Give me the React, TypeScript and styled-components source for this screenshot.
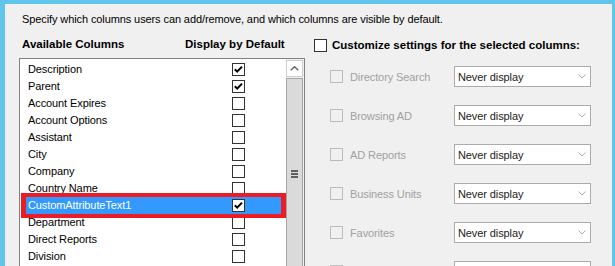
import React from "react";
import styled, { createGlobalStyle } from "styled-components";

const Global = createGlobalStyle`
  html, body { margin: 0; padding: 0; background: #f0f0f0; }
  body {
    font-family: "Liberation Sans", Arial, sans-serif;
    font-size: 11px;
    letter-spacing: -0.1px;
    color: #000;
  }
`;

const Window = styled.div`
  width: 615px;
  height: 266px;
  box-sizing: border-box;
  border-style: solid;
  border-color: #5fc5ea;
  border-width: 4px 3px 0 5px;
  background: #f0f0f0;
  overflow: hidden;
  padding: 9px 0 0 14px;
`;

const Intro = styled.div`
  line-height: 13px;
  margin-left: 3px;
  white-space: nowrap;
`;

const Columns = styled.div`
  display: flex;
  gap: 9px;
  margin-top: 12px;
  align-items: flex-start;
`;

const LeftCol = styled.div`
  width: 286px;
  display: flex;
  flex-direction: column;
`;

const HeaderRow = styled.div`
  display: flex;
  line-height: 13px;
  font-size: 11.5px;
  letter-spacing: 0;
  font-weight: bold;
  padding-left: 3px;
  height: 13px;
  margin-bottom: 7px;
  white-space: nowrap;
`;

const HeaderCell = styled.div<{ $w?: number }>`
  width: ${(p) => (p.$w ? `${p.$w}px` : "auto")};
`;

const ListBox = styled.div`
  border: 1px solid #828282;
  background: #fff;
  height: 240px;
  display: flex;
`;

const Items = styled.div`
  flex: 1;
  padding: 2px 5px 0 6px;
  display: flex;
  flex-direction: column;
`;

const Row = styled.div<{ $selected?: boolean }>`
  height: 17px;
  display: flex;
  align-items: center;
  background: ${(p) => (p.$selected ? "#3399ff" : "transparent")};
  color: ${(p) => (p.$selected ? "#fff" : "#000")};
  box-shadow: ${(p) =>
    p.$selected
      ? "0 0 0 4px #ed1c24, -1px 0 0 4px #ed1c24, 1px 0 0 4px #ed1c24"
      : "none"};
  position: relative;
  z-index: ${(p) => (p.$selected ? 1 : 0)};
`;

const RowLabel = styled.span`
  width: 204px;
  padding-left: 2px;
  white-space: nowrap;
  line-height: 17px;
`;

const Box = styled.span<{ $disabled?: boolean }>`
  width: 13px;
  height: 13px;
  box-sizing: border-box;
  border: 1px solid ${(p) => (p.$disabled ? "#bcbcbc" : "#333")};
  background: ${(p) => (p.$disabled ? "#f0f0f0" : "#fff")};
  display: inline-flex;
  align-items: center;
  justify-content: center;
  flex-shrink: 0;
`;

const Scrollbar = styled.div`
  width: 18px;
  box-sizing: border-box;
  padding: 1px 1px 0 0;
  background: #f0f0f0;
  display: flex;
  flex-direction: column;
  gap: 1px;
`;

const ScrollButton = styled.div`
  height: 17px;
  box-sizing: border-box;
  border: 1px solid #cdcdcd;
  background: #fff;
  display: flex;
  align-items: center;
  justify-content: center;
`;

const Thumb = styled.div`
  height: 192px;
  box-sizing: border-box;
  border: 1px solid #a6a6a6;
  background: #dadada;
  display: flex;
  flex-direction: column;
  align-items: center;
  justify-content: center;
  gap: 1px;
`;

const Grip = styled.span`
  width: 7px;
  height: 2px;
  background: #606060;
`;

const RightCol = styled.div`
  display: flex;
  flex-direction: column;
`;

const RightHeader = styled.label`
  display: flex;
  align-items: center;
  gap: 5px;
  height: 13px;
  line-height: 13px;
  font-size: 11.5px;
  letter-spacing: 0;
  font-weight: bold;
  margin-top: 1px;
  white-space: nowrap;
`;

const Settings = styled.div`
  display: flex;
  flex-direction: column;
  gap: 18px;
  margin-top: 14px;
  padding-left: 16px;
`;

const SettingRow = styled.div`
  display: flex;
  align-items: center;
  height: 21px;
`;

const SettingLabel = styled.span`
  width: 104px;
  margin-left: 7px;
  color: #a0a0a0;
  white-space: nowrap;
`;

const Select = styled.div`
  width: 137px;
  height: 21px;
  box-sizing: border-box;
  border: 1px solid #ababab;
  background: #fff;
  display: flex;
  align-items: center;
  justify-content: space-between;
  padding: 0 4px 0 3px;
  color: #222;
`;

const Check = () => (
  <svg width="11" height="11" viewBox="0 0 11 11">
    <path d="M1.8 5.2 L4.2 7.6 L9 2.6" fill="none" stroke="#000" strokeWidth="2" />
  </svg>
);

const Checkbox = ({ checked, disabled }: { checked?: boolean; disabled?: boolean }) => (
  <Box $disabled={disabled}>{checked ? <Check /> : null}</Box>
);

const Chevron = () => (
  <svg width="8" height="5" viewBox="0 0 8 5">
    <path d="M0.5 0.5 L4 4 L7.5 0.5" fill="none" stroke="#b0b0b0" strokeWidth="1" />
  </svg>
);

const UpArrow = () => (
  <svg width="9" height="5" viewBox="0 0 9 5">
    <path d="M0.7 4.3 L4.5 0.7 L8.3 4.3" fill="none" stroke="#606060" strokeWidth="1.3" />
  </svg>
);

const columns: { name: string; checked?: boolean; selected?: boolean }[] = [
  { name: "Description", checked: true },
  { name: "Parent", checked: true },
  { name: "Account Expires" },
  { name: "Account Options" },
  { name: "Assistant" },
  { name: "City" },
  { name: "Company" },
  { name: "Country Name" },
  { name: "CustomAttributeText1", checked: true, selected: true },
  { name: "Department" },
  { name: "Direct Reports" },
  { name: "Division" },
];

const settings: { label: string; value: string }[] = [
  { label: "Directory Search", value: "Never display" },
  { label: "Browsing AD", value: "Never display" },
  { label: "AD Reports", value: "Never display" },
  { label: "Business Units", value: "Never display" },
  { label: "Favorites", value: "Never display" },
  { label: "", value: "" },
];

export default function App() {
  return (
    <>
      <Global />
      <Window>
        <Intro>
          Specify which columns users can add/remove, and which columns are visible by default.
        </Intro>
        <Columns>
          <LeftCol>
            <HeaderRow>
              <HeaderCell $w={163}>Available Columns</HeaderCell>
              <HeaderCell>Display by Default</HeaderCell>
            </HeaderRow>
            <ListBox>
              <Items>
                {columns.map((c) => (
                  <Row key={c.name} $selected={c.selected}>
                    <RowLabel>{c.name}</RowLabel>
                    <Checkbox checked={c.checked} />
                  </Row>
                ))}
              </Items>
              <Scrollbar>
                <ScrollButton>
                  <UpArrow />
                </ScrollButton>
                <Thumb>
                  <Grip />
                  <Grip />
                  <Grip />
                </Thumb>
              </Scrollbar>
            </ListBox>
          </LeftCol>
          <RightCol>
            <RightHeader>
              <Checkbox />
              Customize settings for the selected columns:
            </RightHeader>
            <Settings>
              {settings.map((s, i) => (
                <SettingRow key={i}>
                  <Checkbox disabled />
                  <SettingLabel>{s.label}</SettingLabel>
                  <Select>
                    <span>{s.value}</span>
                    <Chevron />
                  </Select>
                </SettingRow>
              ))}
            </Settings>
          </RightCol>
        </Columns>
      </Window>
    </>
  );
}
